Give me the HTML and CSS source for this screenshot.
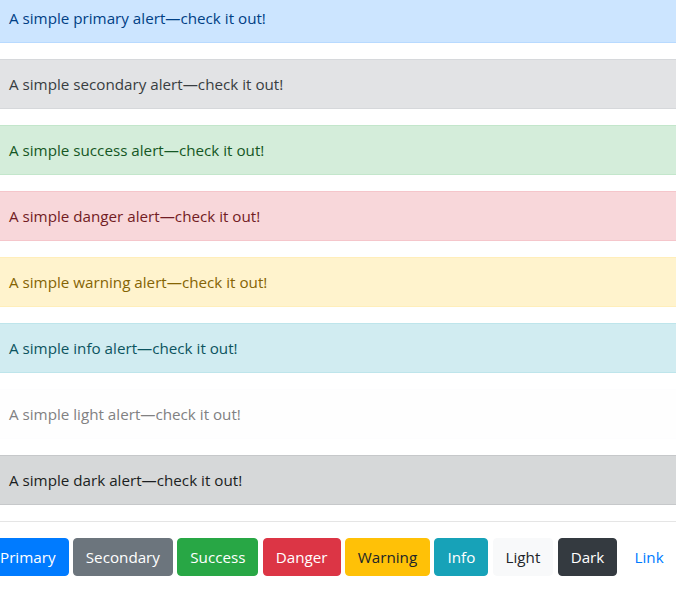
FILE: index.html
```html
<!DOCTYPE html>
<html lang="en">
<head>
<meta charset="utf-8">
<title>Alerts</title>
<link rel="stylesheet" href="styles.css">
</head>
<body>
<div class="page">
  <div class="alert alert-primary">A simple primary alert—check it out!</div>
  <div class="alert alert-secondary">A simple secondary alert—check it out!</div>
  <div class="alert alert-success">A simple success alert—check it out!</div>
  <div class="alert alert-danger">A simple danger alert—check it out!</div>
  <div class="alert alert-warning">A simple warning alert—check it out!</div>
  <div class="alert alert-info">A simple info alert—check it out!</div>
  <div class="alert alert-light">A simple light alert—check it out!</div>
  <div class="alert alert-dark">A simple dark alert—check it out!</div>
  <hr class="divider">
  <div class="buttons">
    <button class="btn btn-primary">Primary</button>
    <button class="btn btn-secondary">Secondary</button>
    <button class="btn btn-success">Success</button>
    <button class="btn btn-danger">Danger</button>
    <button class="btn btn-warning">Warning</button>
    <button class="btn btn-info">Info</button>
    <button class="btn btn-light">Light</button>
    <button class="btn btn-dark">Dark</button>
    <button class="btn btn-link">Link</button>
  </div>
</div>
</body>
</html>
```

FILE: styles.css
```css
html, body {
  margin: 0;
  padding: 0;
  overflow: hidden;
  background: #fff;
}

body {
  font-family: "Open Sans", "Noto Sans", "Liberation Sans", sans-serif;
  font-size: 15.2px;
  line-height: 24px;
  color: #212529;
}

.page {
  margin: -7px 0 0 -12px;
  width: 720px;
}

.alert {
  padding: 12px 20px;
  margin-bottom: 16px;
  border: 1px solid transparent;
  border-radius: 4px;
}

.alert-primary { color: #004085; background: #cce5ff; border-color: #b8daff; }
.alert-secondary { color: #383d41; background: #e2e3e5; border-color: #d6d8db; }
.alert-success { color: #155724; background: #d4edda; border-color: #c3e6cb; }
.alert-danger { color: #721c24; background: #f8d7da; border-color: #f5c6cb; }
.alert-warning { color: #856404; background: #fff3cd; border-color: #ffeeba; }
.alert-info { color: #0c5460; background: #d1ecf1; border-color: #bee5eb; }
.alert-light { color: #818182; background: #fefefe; border-color: #fdfdfe; }
.alert-dark { color: #1b1e21; background: #d6d8d9; border-color: #c6c8ca; }

.divider {
  margin: 16px 0;
  border: 0;
  border-top: 1px solid rgba(0, 0, 0, 0.1);
}

.buttons {
  display: flex;
  gap: 4.3px;
  margin-left: -1px;
}

.btn {
  font-family: inherit;
  font-size: 15.2px;
  line-height: 24px;
  padding: 6px 12px;
  border: 1px solid transparent;
  border-radius: 4px;
  color: #fff;
  cursor: pointer;
}

.btn-primary { background: #007bff; border-color: #007bff; }
.btn-secondary { background: #6c757d; border-color: #6c757d; }
.btn-success { background: #28a745; border-color: #28a745; }
.btn-danger { background: #dc3545; border-color: #dc3545; }
.btn-warning { background: #ffc107; border-color: #ffc107; color: #212529; }
.btn-info { background: #17a2b8; border-color: #17a2b8; }
.btn-light { background: #f8f9fa; border-color: #f8f9fa; color: #212529; }
.btn-dark { background: #343a40; border-color: #343a40; }
.btn-link { background: transparent; color: #007bff; }
```
